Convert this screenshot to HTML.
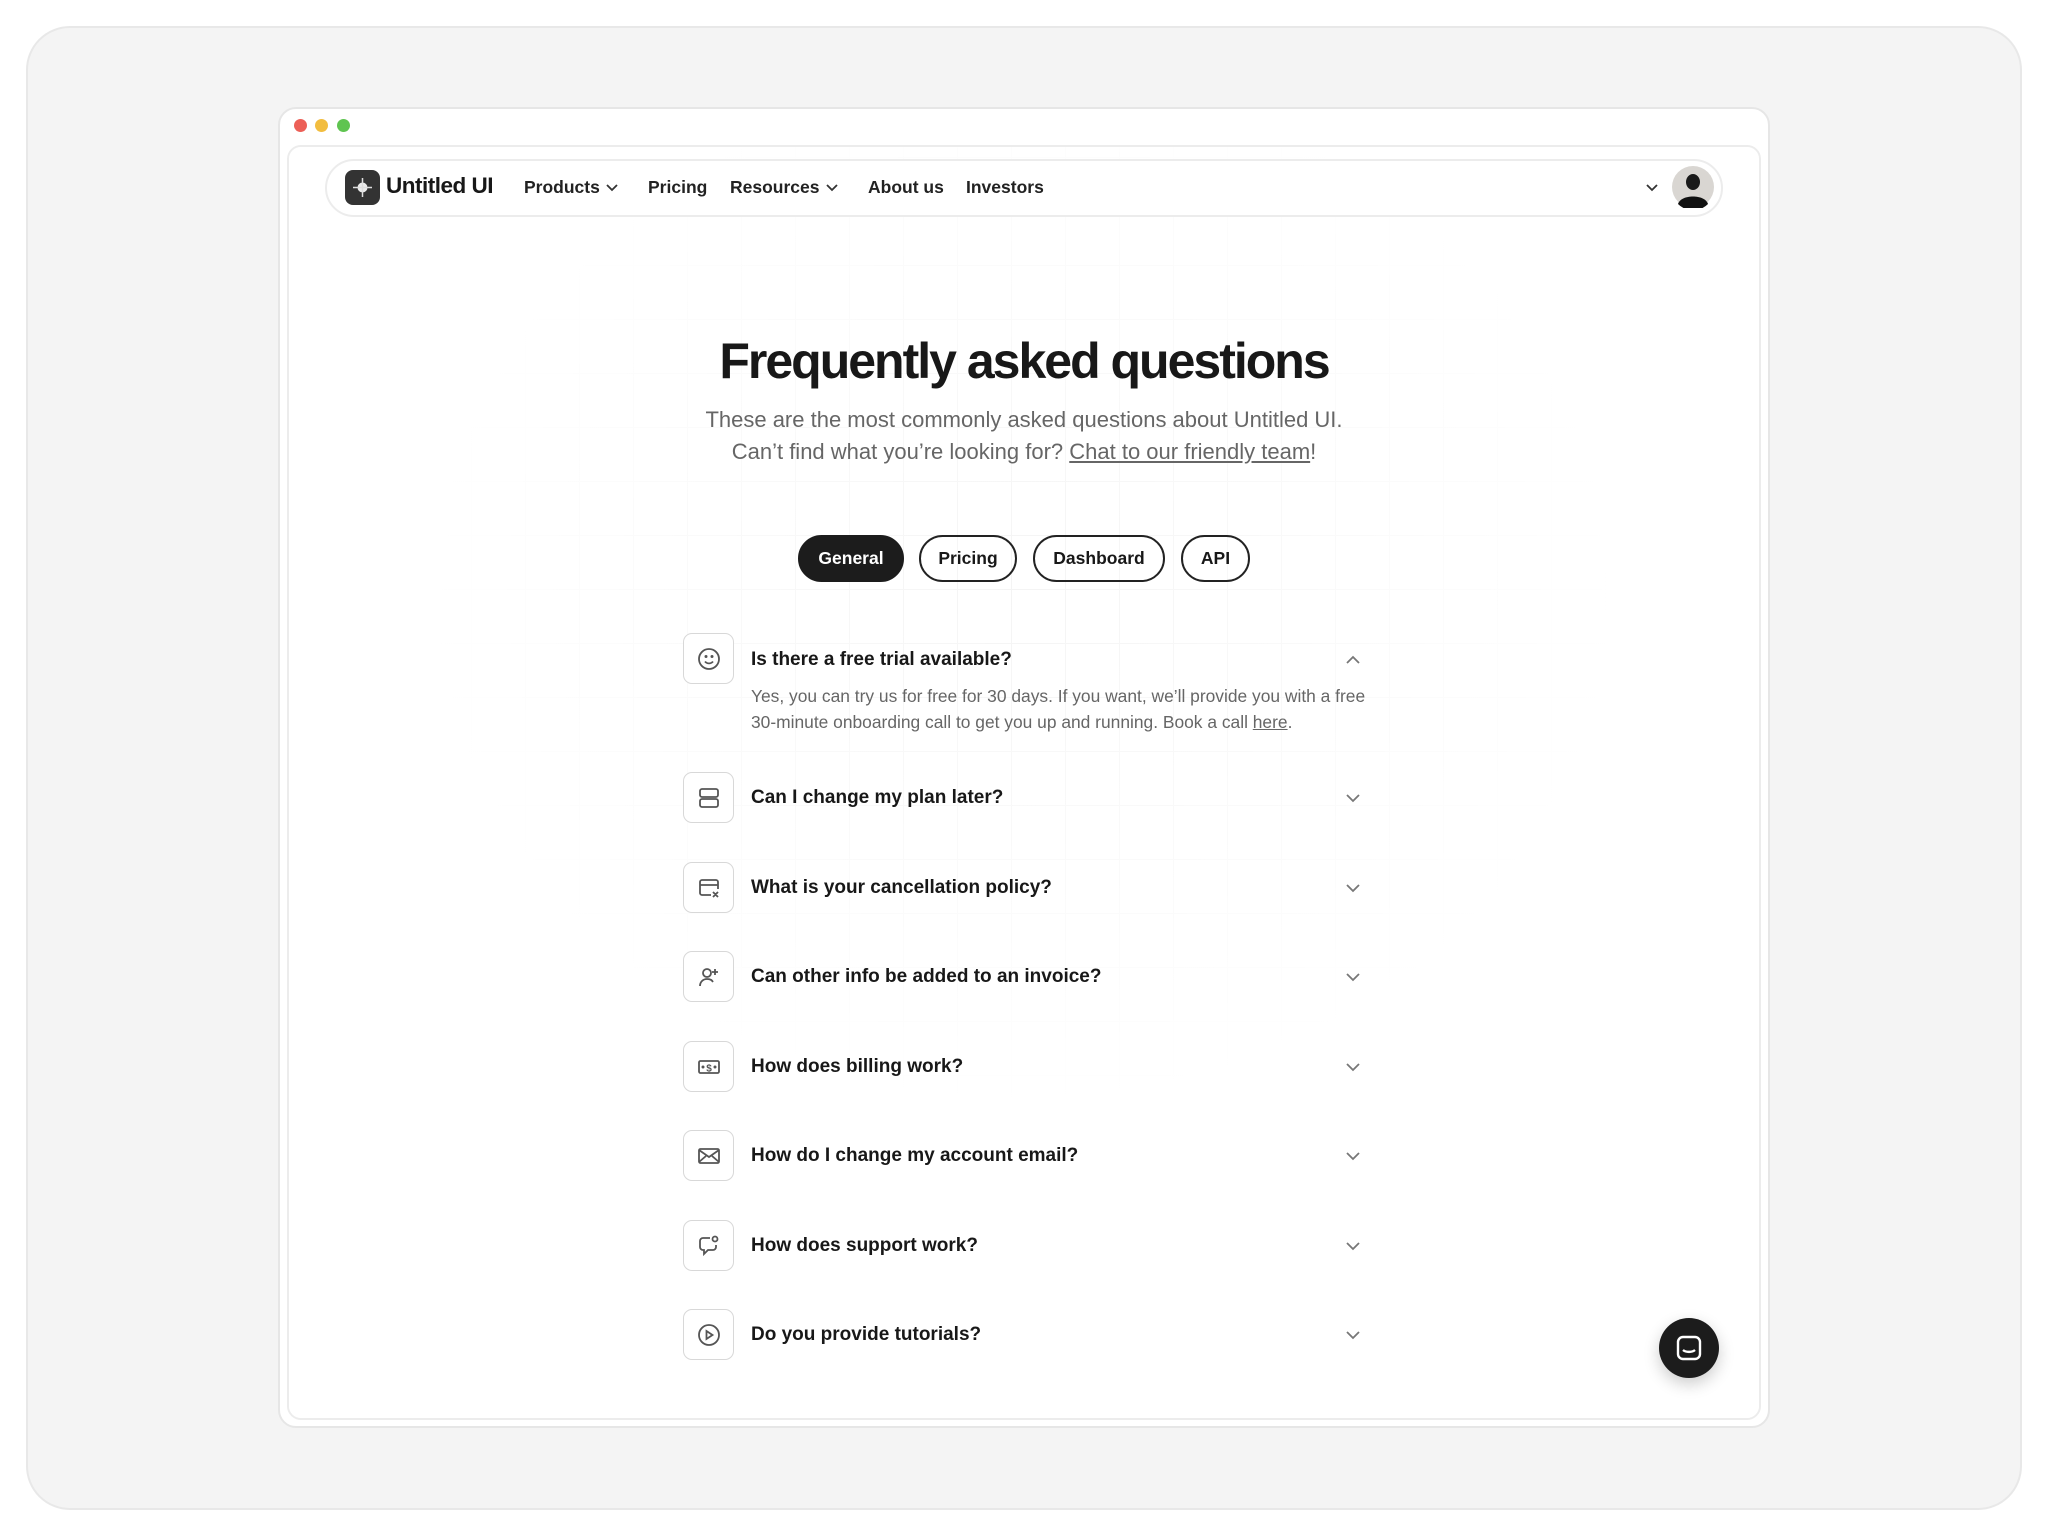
<!DOCTYPE html>
<html><head><meta charset="utf-8"><style>
*{box-sizing:border-box;margin:0;padding:0}
body{width:2048px;height:1536px;background:#fff;font-family:"Liberation Sans",sans-serif;position:relative;overflow:hidden;color:#181818}
.outer{position:absolute;left:26px;top:26px;width:1996px;height:1484px;background:#f4f4f4;border:2px solid #e8e8e8;border-radius:44px}
.win{position:absolute;left:278px;top:107px;width:1492px;height:1321px;background:#fff;border:2px solid #e6e6e6;border-radius:18px}
.dot{position:absolute;top:119px;width:13px;height:13px;border-radius:50%}
.inner{position:absolute;left:287px;top:145px;width:1474px;height:1275px;border:2px solid #ececec;border-radius:14px;overflow:hidden;
background-image:linear-gradient(#f3f3f3 1px,transparent 1px),linear-gradient(90deg,#f3f3f3 1px,transparent 1px);background-size:54px 54px;background-position:20px 10px}
.fade{position:absolute;inset:0;background:radial-gradient(ellipse 600px 520px at 50% 35%,rgba(255,255,255,0.1),#fff 100%)}
.nav{position:absolute;left:325px;top:159px;width:1398px;height:58px;border:2px solid #ececec;border-radius:30px;background:#fff}
.logo{position:absolute;left:345px;top:170px;width:35px;height:35px;border-radius:8px;background:#333;}
.t{position:absolute;white-space:nowrap}
.nl{font-size:17.5px;font-weight:bold;top:177px;color:#222}
.tab{position:absolute;top:535px;height:47px;border:2px solid #222;border-radius:24px;font-size:17.5px;font-weight:bold;display:flex;align-items:center;justify-content:center}
.ib{position:absolute;left:683px;width:51px;height:51px;border:1.5px solid #d8d8d8;border-radius:9px;background:#fff;display:flex;align-items:center;justify-content:center}
.q{position:absolute;left:751px;font-size:19px;font-weight:bold;color:#181818}
.ch{position:absolute;left:1344px}
</style></head><body>
<div class="outer"></div>
<div class="win"></div>
<div class="dot" style="left:294px;background:#ec5f57"></div>
<div class="dot" style="left:315px;background:#f2bd3f"></div>
<div class="dot" style="left:337px;background:#5fc450"></div>
<div class="inner"><div class="fade"></div></div>
<div class="nav"></div>
<div class="logo"><svg width="35" height="35"><circle cx="17.5" cy="17.5" r="5" fill="#fff" opacity=".9"/><path d="M17.5 8v19M8 17.5h19" stroke="#ddd" stroke-width="1.5"/></svg></div>
<div class="t" style="left:386px;top:173px;font-size:22.5px;font-weight:bold;letter-spacing:-0.5px">Untitled UI</div>
<div class="t nl" style="left:524px">Products</div>
<svg class="t" style="left:605px;top:181px" width="14" height="14"><path d="M2 4l5 5 5-5" fill="none" stroke="#333" stroke-width="1.8"/></svg>
<div class="t nl" style="left:648px">Pricing</div>
<div class="t nl" style="left:730px">Resources</div>
<svg class="t" style="left:825px;top:181px" width="14" height="14"><path d="M2 4l5 5 5-5" fill="none" stroke="#333" stroke-width="1.8"/></svg>
<div class="t nl" style="left:868px">About us</div>
<div class="t nl" style="left:966px">Investors</div>
<svg class="t" style="left:1645px;top:181px" width="14" height="14"><path d="M2 4l5 5 5-5" fill="none" stroke="#333" stroke-width="1.8"/></svg>
<svg class="t" style="left:1672px;top:166px" width="42" height="42"><circle cx="21" cy="21" r="21" fill="#d9d6d2"/><ellipse cx="21" cy="16" rx="7" ry="8" fill="#1a1a1a"/><path d="M6 38c3-10 27-10 30 0a21 21 0 0 1-30 0z" fill="#111"/></svg>
<div class="t" style="left:0;width:2048px;text-align:center;top:332px;font-size:50px;font-weight:bold;letter-spacing:-2px;color:#181818">Frequently asked questions</div>
<div class="t" style="left:0;width:2048px;text-align:center;top:404px;font-size:22px;color:#666;line-height:32px">These are the most commonly asked questions about Untitled UI.<br>Can’t find what you’re looking for? <span style="text-decoration:underline">Chat to our friendly team</span>!</div>
<div class="tab" style="left:798px;width:106px;background:#1c1c1c;color:#fff;border-color:#1c1c1c">General</div>
<div class="tab" style="left:919px;width:98px">Pricing</div>
<div class="tab" style="left:1033px;width:132px">Dashboard</div>
<div class="tab" style="left:1181px;width:69px">API</div>

<div class="ib" style="top:633px"><svg width="26" height="26" fill="none" stroke="#555" stroke-width="1.8"><circle cx="13" cy="13" r="10"/><path d="M9 15.5c2 2.5 6 2.5 8 0"/><circle cx="10" cy="10.5" r=".6" fill="#555"/><circle cx="16" cy="10.5" r=".6" fill="#555"/></svg></div>
<div class="t q" style="top:649px">Is there a free trial available?</div>
<svg class="t ch" style="top:651px" width="18" height="18"><path d="M3 12l6-6 6 6" fill="none" stroke="#777" stroke-width="1.8"/></svg>
<div class="t" style="left:751px;top:683px;font-size:17.4px;color:#666;line-height:26px">Yes, you can try us for free for 30 days. If you want, we’ll provide you with a free<br>30-minute onboarding call to get you up and running. Book a call <span style="text-decoration:underline">here</span>.</div>

<div class="ib" style="top:772px"><svg width="26" height="26" fill="none" stroke="#555" stroke-width="1.8"><rect x="4" y="4" width="18" height="8" rx="2"/><rect x="4" y="14" width="18" height="8" rx="2"/></svg></div>
<div class="t q" style="top:787px">Can I change my plan later?</div>
<svg class="t ch" style="top:789px" width="18" height="18"><path d="M3 6l6 6 6-6" fill="none" stroke="#777" stroke-width="1.8"/></svg>

<div class="ib" style="top:862px"><svg width="26" height="26" fill="none" stroke="#555" stroke-width="1.8"><path d="M15 20H6a2 2 0 0 1-2-2V7a2 2 0 0 1 2-2h14a2 2 0 0 1 2 2v7M4 10h18M17 17l5 5M22 17l-5 5"/></svg></div>
<div class="t q" style="top:877px">What is your cancellation policy?</div>
<svg class="t ch" style="top:879px" width="18" height="18"><path d="M3 6l6 6 6-6" fill="none" stroke="#777" stroke-width="1.8"/></svg>

<div class="ib" style="top:951px"><svg width="26" height="26" fill="none" stroke="#555" stroke-width="1.8"><circle cx="11" cy="9" r="4"/><path d="M4 22c0-4 3-7 7-7s5 1.5 6 3M19 5v6M16 8h6"/></svg></div>
<div class="t q" style="top:966px">Can other info be added to an invoice?</div>
<svg class="t ch" style="top:968px" width="18" height="18"><path d="M3 6l6 6 6-6" fill="none" stroke="#777" stroke-width="1.8"/></svg>

<div class="ib" style="top:1041px"><svg width="26" height="26" fill="none" stroke="#555" stroke-width="1.8"><rect x="3" y="7" width="20" height="12" rx="1.5"/><text x="13" y="17.5" font-size="10" text-anchor="middle" fill="#555" stroke="none" font-weight="bold" font-family="Liberation Sans">$</text><circle cx="7" cy="13" r=".6" fill="#555"/><circle cx="19" cy="13" r=".6" fill="#555"/></svg></div>
<div class="t q" style="top:1056px">How does billing work?</div>
<svg class="t ch" style="top:1058px" width="18" height="18"><path d="M3 6l6 6 6-6" fill="none" stroke="#777" stroke-width="1.8"/></svg>

<div class="ib" style="top:1130px"><svg width="26" height="26" fill="none" stroke="#555" stroke-width="1.8"><rect x="3" y="6" width="20" height="14" rx="1.5"/><path d="M3 7l10 7 10-7M3 19l7-6M23 19l-7-6"/></svg></div>
<div class="t q" style="top:1145px">How do I change my account email?</div>
<svg class="t ch" style="top:1147px" width="18" height="18"><path d="M3 6l6 6 6-6" fill="none" stroke="#777" stroke-width="1.8"/></svg>

<div class="ib" style="top:1220px"><svg width="26" height="26" fill="none" stroke="#555" stroke-width="1.8"><path d="M14 5H7a3 3 0 0 0-3 3v6a3 3 0 0 0 3 3h1v4l4-4h5a3 3 0 0 0 3-3v-2"/><circle cx="19" cy="6" r="2.5"/></svg></div>
<div class="t q" style="top:1235px">How does support work?</div>
<svg class="t ch" style="top:1237px" width="18" height="18"><path d="M3 6l6 6 6-6" fill="none" stroke="#777" stroke-width="1.8"/></svg>

<div class="ib" style="top:1309px"><svg width="26" height="26" fill="none" stroke="#555" stroke-width="1.8"><circle cx="13" cy="13" r="10"/><path d="M10.5 9l6 4-6 4z"/></svg></div>
<div class="t q" style="top:1324px">Do you provide tutorials?</div>
<svg class="t ch" style="top:1326px" width="18" height="18"><path d="M3 6l6 6 6-6" fill="none" stroke="#777" stroke-width="1.8"/></svg>

<div class="t" style="left:1659px;top:1318px;width:60px;height:60px;border-radius:50%;background:#1c1c1c;box-shadow:0 6px 16px rgba(0,0,0,.2)"><svg width="60" height="60" fill="none" stroke="#fff" stroke-width="2.4"><rect x="19" y="19" width="22" height="22" rx="5"/><path d="M24 32c3 2.5 9 2.5 12 0"/></svg></div>
</body></html>
